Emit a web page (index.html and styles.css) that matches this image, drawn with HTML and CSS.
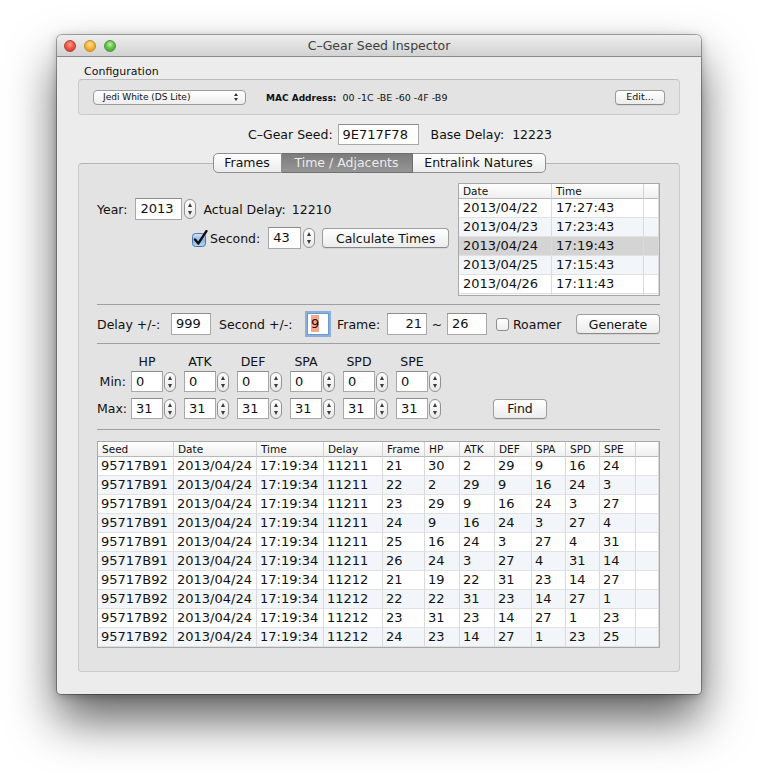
FILE: index.html
```html
<!DOCTYPE html>
<html lang="en">
<head>
    <meta charset="UTF-8">
    <title>C–Gear Seed Inspector</title>
    <link rel="stylesheet" href="styles.css">
</head>
<body>
<div class="window">
    <div class="titlebar">
        <div class="lights">
            <span class="light red"></span>
            <span class="light yellow"></span>
            <span class="light green"></span>
        </div>
        <div class="title">C–Gear Seed Inspector</div>
    </div>

    <div class="content">
        <div class="group-label">Configuration</div>
        <div class="group config">
            <div class="popup">Jedi White (DS Lite)<span class="popup-arrows"></span></div>
            <div class="mac"><b>MAC Address:</b>&nbsp; 00 -1C -BE -60 -4F -B9</div>
            <button class="btn edit">Edit...</button>
        </div>

        <div class="seed-row">
            <span>C–Gear Seed:</span>
            <div class="field seed">9E717F78</div>
            <span class="base">Base Delay:</span>
            <span class="base-value">12223</span>
        </div>

        <div class="tabs">
            <div class="tab t-frames">Frames</div>
            <div class="tab t-time active">Time / Adjacents</div>
            <div class="tab t-natures">Entralink Natures</div>
        </div>

        <div class="tab-box">
            <div class="top-section">
                <div class="time-controls">
                    <div class="row year-row">
                        <span>Year:</span>
                        <div class="field year">2013</div>
                        <span class="stepper"></span>
                        <span class="actual">Actual Delay:</span>
                        <span class="actual-value">12210</span>
                    </div>
                    <div class="row second-row">
                        <svg class="check" width="16" height="17" viewBox="0 0 16 17">
                            <defs>
                                <linearGradient id="cb" x1="0" y1="0" x2="0" y2="1">
                                    <stop offset="0" stop-color="#d6e6f8"/>
                                    <stop offset="0.5" stop-color="#8fb6e6"/>
                                    <stop offset="1" stop-color="#b9d4f2"/>
                                </linearGradient>
                            </defs>
                            <rect x="0.5" y="3.5" width="13" height="13" rx="3" fill="url(#cb)" stroke="#4c74a8"/>
                            <path d="M3 9.5 L6.3 13.5 L14.5 1" fill="none" stroke="#111" stroke-width="2.3" stroke-linejoin="round" stroke-linecap="round"/>
                        </svg>
                        <span class="sec-label">Second:</span>
                        <div class="field second">43</div>
                        <span class="stepper"></span>
                        <button class="btn calc">Calculate Times</button>
                    </div>
                </div>

                <div class="list dates">
                    <table>
                        <colgroup><col style="width:93px"><col style="width:92px"><col></colgroup>
                        <tr class="head"><th>Date</th><th>Time</th><th></th></tr>
                        <tr><td>2013/04/22</td><td>17:27:43</td><td></td></tr>
                        <tr class="alt"><td>2013/04/23</td><td>17:23:43</td><td></td></tr>
                        <tr class="selected"><td>2013/04/24</td><td>17:19:43</td><td></td></tr>
                        <tr class="alt"><td>2013/04/25</td><td>17:15:43</td><td></td></tr>
                        <tr><td>2013/04/26</td><td>17:11:43</td><td></td></tr>
                        <tr class="alt"><td></td><td></td><td></td></tr>
                    </table>
                </div>
            </div>

            <div class="separator"></div>

            <div class="row delay-row">
                <span class="l-delay">Delay +/-:</span>
                <div class="field w40">999</div>
                <span class="l-sec">Second +/-:</span>
                <div class="field focused"><span class="sel">9</span></div>
                <span class="l-frame">Frame:</span>
                <div class="field w40 right">21</div>
                <span class="tilde">~</span>
                <div class="field w40">26</div>
                <span class="box"></span>
                <span class="roamer">Roamer</span>
                <button class="btn generate">Generate</button>
            </div>

            <div class="separator"></div>

            <div class="stats">
                <div class="stat-head">
                    <span>HP</span><span>ATK</span><span>DEF</span><span>SPA</span><span>SPD</span><span>SPE</span>
                </div>
                <div class="row stat-row min-row">
                    <span class="stat-label">Min:</span>
                    <div class="field iv">0</div><span class="stepper"></span>
                    <div class="field iv">0</div><span class="stepper"></span>
                    <div class="field iv">0</div><span class="stepper"></span>
                    <div class="field iv">0</div><span class="stepper"></span>
                    <div class="field iv">0</div><span class="stepper"></span>
                    <div class="field iv">0</div><span class="stepper"></span>
                </div>
                <div class="row stat-row max-row">
                    <span class="stat-label">Max:</span>
                    <div class="field iv">31</div><span class="stepper"></span>
                    <div class="field iv">31</div><span class="stepper"></span>
                    <div class="field iv">31</div><span class="stepper"></span>
                    <div class="field iv">31</div><span class="stepper"></span>
                    <div class="field iv">31</div><span class="stepper"></span>
                    <div class="field iv">31</div><span class="stepper"></span>
                    <button class="btn find">Find</button>
                </div>
            </div>

            <div class="separator bottom"></div>

            <div class="list results">
                <table>
                    <colgroup>
                        <col style="width:76px"><col style="width:83px"><col style="width:67px"><col style="width:59px">
                        <col style="width:42px"><col style="width:35px"><col style="width:35px"><col style="width:37px">
                        <col style="width:34px"><col style="width:34px"><col style="width:36px"><col>
                    </colgroup>
                    <tr class="head"><th>Seed</th><th>Date</th><th>Time</th><th>Delay</th><th>Frame</th><th>HP</th><th>ATK</th><th>DEF</th><th>SPA</th><th>SPD</th><th>SPE</th><th></th></tr>
                    <tr><td>95717B91</td><td>2013/04/24</td><td>17:19:34</td><td>11211</td><td>21</td><td>30</td><td>2</td><td>29</td><td>9</td><td>16</td><td>24</td><td></td></tr>
                    <tr class="alt"><td>95717B91</td><td>2013/04/24</td><td>17:19:34</td><td>11211</td><td>22</td><td>2</td><td>29</td><td>9</td><td>16</td><td>24</td><td>3</td><td></td></tr>
                    <tr><td>95717B91</td><td>2013/04/24</td><td>17:19:34</td><td>11211</td><td>23</td><td>29</td><td>9</td><td>16</td><td>24</td><td>3</td><td>27</td><td></td></tr>
                    <tr class="alt"><td>95717B91</td><td>2013/04/24</td><td>17:19:34</td><td>11211</td><td>24</td><td>9</td><td>16</td><td>24</td><td>3</td><td>27</td><td>4</td><td></td></tr>
                    <tr><td>95717B91</td><td>2013/04/24</td><td>17:19:34</td><td>11211</td><td>25</td><td>16</td><td>24</td><td>3</td><td>27</td><td>4</td><td>31</td><td></td></tr>
                    <tr class="alt"><td>95717B91</td><td>2013/04/24</td><td>17:19:34</td><td>11211</td><td>26</td><td>24</td><td>3</td><td>27</td><td>4</td><td>31</td><td>14</td><td></td></tr>
                    <tr><td>95717B92</td><td>2013/04/24</td><td>17:19:34</td><td>11212</td><td>21</td><td>19</td><td>22</td><td>31</td><td>23</td><td>14</td><td>27</td><td></td></tr>
                    <tr class="alt"><td>95717B92</td><td>2013/04/24</td><td>17:19:34</td><td>11212</td><td>22</td><td>22</td><td>31</td><td>23</td><td>14</td><td>27</td><td>1</td><td></td></tr>
                    <tr><td>95717B92</td><td>2013/04/24</td><td>17:19:34</td><td>11212</td><td>23</td><td>31</td><td>23</td><td>14</td><td>27</td><td>1</td><td>23</td><td></td></tr>
                    <tr class="alt"><td>95717B92</td><td>2013/04/24</td><td>17:19:34</td><td>11212</td><td>24</td><td>23</td><td>14</td><td>27</td><td>1</td><td>23</td><td>25</td><td></td></tr>
                </table>
            </div>
        </div>
    </div>
</div>
</body>
</html>
```

FILE: styles.css
```css
* {
    box-sizing: border-box;
}

html {
    height: 100%;
    background: #fff;
}

body {
    margin: 0;
    min-height: 773px;
    padding: 35px 0 0 57px;
    background: #fff;
    font-family: "DejaVu Sans", "Noto Sans", sans-serif;
    font-size: 12.5px;
    color: #111;
}

.window {
    position: relative;
    width: 644px;
    height: 659px;
    background: #ececec;
    border-radius: 5px 5px 4px 4px;
    box-shadow: 0 0 0 1px rgba(0,0,0,0.3), 0 26px 48px rgba(0,0,0,0.62), 0 2px 10px rgba(0,0,0,0.25);
}

/* title bar */
.titlebar {
    height: 22px;
    display: flex;
    align-items: center;
    background: linear-gradient(#eeeeee, #d2d2d2);
    border-bottom: 1px solid #8a8a8a;
    border-radius: 5px 5px 0 0;
}
.lights {
    width: 70px;
    display: flex;
    padding-left: 7px;
    padding-top: 1px;
}
.light {
    width: 12px;
    height: 12px;
    border-radius: 50%;
    margin-right: 8px;
}
.light.red {
    background: radial-gradient(circle at 50% 35%, #ff9a8c 0, #f05a4c 45%, #c9302a 100%);
    border: 1px solid #b5403a;
}
.light.yellow {
    background: radial-gradient(circle at 50% 35%, #ffe2a0 0, #f9b73c 45%, #d98c16 100%);
    border: 1px solid #c48a2a;
}
.light.green {
    background: radial-gradient(circle at 50% 35%, #bdf0a8 0, #66c44d 45%, #3e9a2c 100%);
    border: 1px solid #4a9a3a;
}
.title {
    flex: 1;
    margin-right: 70px;
    text-align: center;
    color: #3e3e3e;
    font-size: 12.5px;
}

.content {
    padding: 8px 21px 0;
}

/* configuration group */
.group-label {
    font-size: 11px;
    line-height: 13px;
    padding-left: 6px;
}
.group {
    margin-top: 1px;
    height: 36px;
    background: #e3e3e3;
    border: 1px solid #cbcbcb;
    border-top-color: #bdbdbd;
    border-radius: 4px;
    display: flex;
    align-items: center;
    padding: 0 14px;
}
.popup {
    width: 153px;
    height: 15px;
    border: 1px solid #9c9c9c;
    border-radius: 4px;
    background: linear-gradient(#ffffff, #ededed);
    font-size: 9px;
    line-height: 13px;
    padding-left: 9px;
    display: flex;
    align-items: center;
    justify-content: space-between;
    padding-right: 7px;
}
.popup-arrows {
    display: flex;
    flex-direction: column;
    gap: 2px;
}
.popup-arrows::before,
.popup-arrows::after {
    content: '';
    border-left: 2px solid transparent;
    border-right: 2px solid transparent;
}
.popup-arrows::before {
    border-bottom: 3px solid #333;
}
.popup-arrows::after {
    border-top: 3px solid #333;
}
.mac {
    margin-left: 20px;
    font-size: 9.5px;
}
.mac b {
    font-size: 9px;
}
.btn {
    font-family: inherit;
    font-size: 12.5px;
    color: #111;
    height: 20px;
    padding: 0;
    border: 1px solid #9d9d9d;
    border-bottom-color: #8a8a8a;
    border-radius: 4px;
    background: linear-gradient(#ffffff, #ececec);
    box-shadow: 0 1px 0 rgba(0,0,0,0.06);
}
.btn.edit {
    margin-left: auto;
    width: 50px;
    height: 15px;
    font-size: 9.5px;
    line-height: 12px;
}

/* seed row */
.seed-row {
    margin-top: 9px;
    height: 21px;
    padding-left: 170px;
    display: flex;
    align-items: center;
    font-size: 12.5px;
}
.field {
    height: 22px;
    background: #fff;
    border: 1px solid #a8a8a8;
    border-top-color: #8d8d8d;
    padding: 0 4px;
    font-size: 13px;
    line-height: 20px;
    flex-shrink: 0;
}
.field.seed {
    width: 81px;
    height: 21px;
    margin-left: 5px;
    line-height: 19px;
}
.base {
    margin-left: 12px;
}
.base-value {
    margin-left: 8px;
}

/* tabs */
.tabs {
    margin-top: 8px;
    display: flex;
    justify-content: center;
    position: relative;
    z-index: 1;
}
.tab {
    height: 20px;
    line-height: 18px;
    text-align: center;
    background: linear-gradient(#ffffff, #ebebeb);
    border: 1px solid #8f8f8f;
    border-left: none;
    font-size: 12.5px;
}
.t-frames {
    width: 69px;
    border-left: 1px solid #8f8f8f;
    border-radius: 5px 0 0 5px;
}
.t-time {
    width: 131px;
}
.t-natures {
    width: 133px;
    border-radius: 0 5px 5px 0;
}
.tab.active {
    background: linear-gradient(#7c7c7c, #959595);
    color: #ececec;
    border-color: #6f6f6f;
}

.tab-box {
    margin-top: -10px;
    height: 509px;
    background: #e3e3e3;
    border: 1px solid #c9c9c9;
    border-top-color: #b5b5b5;
    border-radius: 4px;
    padding: 19px 19px 0 18px;
}

.row {
    display: flex;
    align-items: center;
}

.top-section {
    display: flex;
    height: 113px;
}
.time-controls {
    flex: 1;
    padding-top: 15px;
}
.year-row {
    height: 22px;
}
.field.year {
    width: 47px;
    margin-left: 8px;
}
.stepper {
    width: 12px;
    height: 20px;
    margin-left: 2px;
    border: 1px solid #929292;
    border-radius: 6px;
    background: linear-gradient(#ffffff, #e8e8e8);
    display: flex;
    flex-direction: column;
    align-items: center;
    justify-content: space-between;
    padding: 3px 0;
    flex-shrink: 0;
}
.stepper::before,
.stepper::after {
    content: '';
    border-left: 2.5px solid transparent;
    border-right: 2.5px solid transparent;
}
.stepper::before {
    border-bottom: 4px solid #3a3a3a;
}
.stepper::after {
    border-top: 4px solid #3a3a3a;
}
.actual {
    margin-left: 7px;
}
.actual-value {
    margin-left: 6px;
}
.second-row {
    margin-top: 7px;
    height: 22px;
    padding-left: 95px;
}
.sec-label {
    margin-left: 2px;
}
.field.second {
    width: 33px;
    margin-left: 8px;
}
.btn.calc {
    width: 127px;
    margin-left: 7px;
}

/* tables */
.list {
    background: #fff;
    border: 1px solid #a9a9a9;
    overflow: hidden;
    flex-shrink: 0;
}
.list table {
    width: 100%;
    border-collapse: separate;
    border-spacing: 0;
    table-layout: fixed;
}
.list th {
    height: 15px;
    padding: 0 0 0 4px;
    font-size: 10.5px;
    font-weight: normal;
    text-align: left;
    line-height: 13px;
    background: linear-gradient(#ffffff, #efefef);
    border-bottom: 1px solid #b9b9b9;
    border-right: 1px solid #d3d3d3;
}
.list td {
    height: 19px;
    padding: 0 0 0 4px;
    font-size: 13px;
    line-height: 18px;
    white-space: nowrap;
    overflow: hidden;
    border-right: 1px solid #dadada;
    border-bottom: 1px solid #e1e1e1;
}
.list tr.alt td {
    background: #f2f5fa;
}
.list tr.selected td {
    background: #d4d4d4;
}
.dates {
    width: 202px;
    height: 113px;
}

.separator {
    margin-top: 8px;
    height: 1px;
    background: #a0a0a0;
}

/* delay row */
.delay-row {
    margin-top: 8px;
    height: 22px;
}
.l-delay {
    width: 74px;
}
.field.w40 {
    width: 40px;
}
.field.right {
    text-align: right;
}
.l-sec {
    margin-left: 8px;
    width: 88px;
}
.field.focused {
    width: 22px;
    padding: 0 3px;
    border-color: #6b98cf;
    box-shadow: 0 0 0 2px rgba(110, 158, 218, 0.75);
}
.sel {
    background: #f5a88b;
    display: inline-block;
    line-height: 17px;
}
.l-frame {
    margin-left: 8px;
    width: 50px;
}
.tilde {
    width: 20px;
    text-align: center;
}
.box {
    width: 13px;
    height: 13px;
    margin-left: 9px;
    border: 1px solid #8e8e8e;
    border-radius: 3px;
    background: linear-gradient(#ffffff, #eeeeee);
}
.roamer {
    margin-left: 4px;
}
.btn.generate {
    margin-left: auto;
    width: 84px;
}

/* iv ranges */
.stats {
    margin-top: 9px;
}
.stat-head {
    display: flex;
    height: 16px;
    align-items: center;
    padding-left: 34px;
}
.stat-head span {
    width: 32px;
    margin-right: 21px;
    text-align: center;
}
.stat-row {
    height: 21px;
}
.min-row {
    margin-top: 2px;
}
.max-row {
    margin-top: 6px;
}
.stat-label {
    width: 34px;
    text-align: right;
    padding-right: 5px;
}
.field.iv {
    width: 32px;
    height: 21px;
    line-height: 19px;
}
.stat-row .stepper {
    margin-left: 1px;
    margin-right: 8px;
}
.btn.find {
    margin-left: 44px;
    width: 54px;
}

.separator.bottom {
    margin-top: 10px;
}

.results {
    margin-top: 11px;
    height: 207px;
}
.results td {
    padding-left: 3px;
}
```
